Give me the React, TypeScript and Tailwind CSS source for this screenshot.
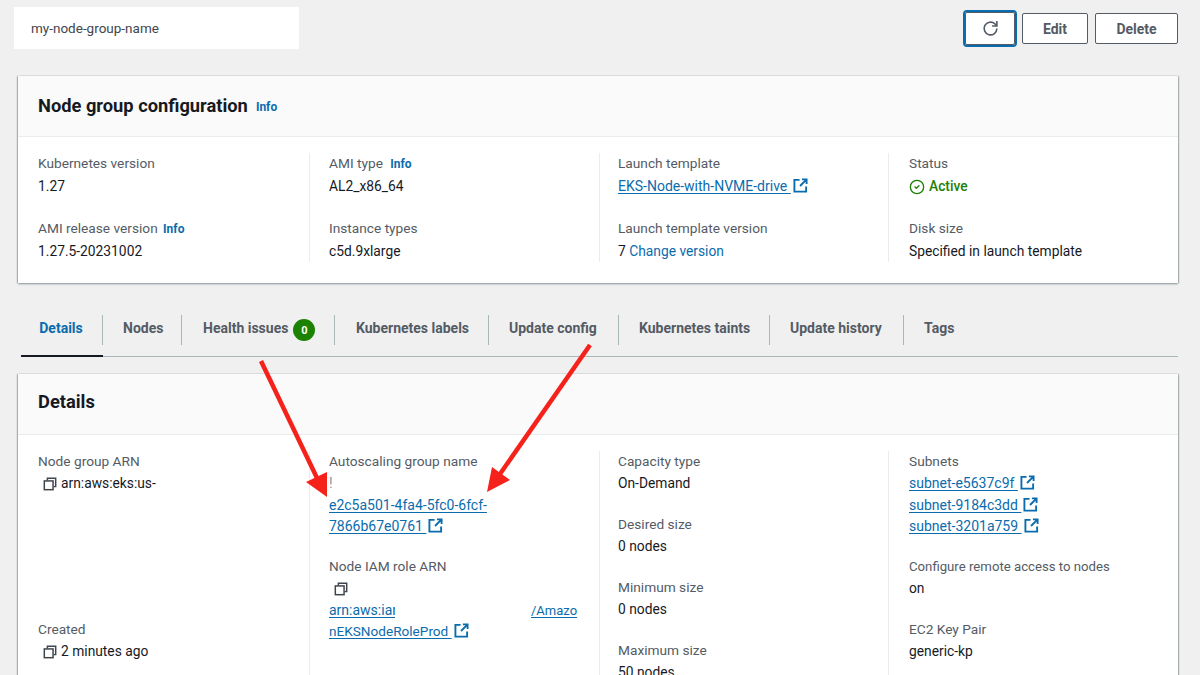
import React from 'react'
import { CircleCheck } from 'lucide-react'

const ExternalIcon = () => (
  <svg viewBox="0 0 16 16" fill="none" stroke="#0a6cad" strokeWidth="2" className="inline-block w-[15px] h-[15px] ml-[2px] align-[-2px]">
    <path d="M7 2H1.5v12.5H14V9" />
    <path d="M9.5 1.5h5v5M14.5 1.5 7.5 8.5" />
  </svg>
)

const CopyIcon = () => (
  <svg viewBox="0 0 16 16" fill="none" stroke="#3f454d" strokeWidth="1.7" className="w-[14px] h-[14px] shrink-0">
    <path d="M5 4V1.5h9.5V11H12" />
    <rect x="1.5" y="4.5" width="10" height="10" />
  </svg>
)

const Info = ({ className = '' }: { className?: string }) => (
  <span className={`text-[12px] font-bold text-[#0a6cad] ${className}`}>Info</span>
)

const Label = ({ children }: { children: React.ReactNode }) => (
  <div className="text-[#545b64] text-[13.7px] h-[21px] whitespace-nowrap">{children}</div>
)

const Link = ({ children }: { children: React.ReactNode }) => (
  <a className="text-[#0a6cad] text-[14px] underline underline-offset-2">{children}</a>
)

const Field = ({ label, children, tight }: { label: React.ReactNode; children: React.ReactNode; tight?: boolean }) => (
  <div>
    <Label>{label}</Label>
    <div className={`${tight ? 'mt-[1px]' : 'mt-[2px]'} text-[13.8px] text-[#16191f] min-h-[21px]`}>{children}</div>
  </div>
)

const Column = ({ first, children, className = '' }: { first?: boolean; children: React.ReactNode; className?: string }) => (
  <div className={`${first ? 'pl-[20px]' : 'border-l border-[#eaeded] pl-[19px]'} pr-[10px] ${className}`}>{children}</div>
)

const tabs = ['Nodes', 'Health issues', 'Kubernetes labels', 'Update config', 'Kubernetes taints', 'Update history', 'Tags']
const tabWidths = ['w-[79px]', 'w-[153px]', 'w-[154px]', 'w-[130px]', 'w-[151px]', 'w-[134px]', 'w-[72px]']

export default function App() {
  return (
    <div className="relative w-[1200px] h-[675px] overflow-hidden bg-[#f0f0f0] text-[14px] leading-[21px] font-['Roboto',sans-serif]">
      {/* top bar */}
      <div className="flex items-start justify-between pl-[14px] pr-[22px] pt-[7px] h-[76px]">
        <div className="w-[285px] h-[42px] bg-white pl-[17px] flex items-center text-[13.5px] text-[#3f454d]">my-node-group-name</div>
        <div className="flex items-center gap-[5px] pt-[3px]">
          <button className="w-[54px] h-[37px] rounded-[4px] border-2 border-[#0a6cad] flex items-center justify-center bg-white outline outline-1 outline-offset-[-3px] outline-[#545b64]">
            <svg viewBox="0 0 16 16" fill="none" stroke="#545b64" strokeWidth="1.5" className="w-[17px] h-[17px]">
              <path d="M14 8a6 6 0 1 1-2-4.5L14 5.5" />
              <path d="M14 1v4.7H9.5" />
            </svg>
          </button>
          <button className="w-[66px] h-[31px] pt-[1px] rounded-[2px] border border-[#545b64] bg-white font-bold text-[#545b64]">Edit</button>
          <button className="ml-[2px] w-[83px] h-[31px] pt-[1px] rounded-[2px] border border-[#545b64] bg-white font-bold text-[#545b64]">Delete</button>
        </div>
      </div>

      {/* node group configuration */}
      <section className="mx-[18px] w-[1160px] h-[207px] bg-white shadow-[0_1px_2px_rgba(0,28,36,0.4),1px_0_1px_rgba(0,28,36,0.2),-1px_0_1px_rgba(0,28,36,0.2)]">
        <header className="h-[61px] bg-[#fafafa] border-b border-[#eaeded] pl-[20px] pb-[2px] flex items-center gap-[8px]">
          <h2 className="text-[18.3px] font-bold text-[#16191f]">Node group configuration</h2>
          <Info className="mt-[5px]" />
        </header>
        <div className="grid grid-cols-[291px_290px_290px_289px] pt-[16px]">
          <Column first className="flex flex-col gap-[21px]">
            <Field label="Kubernetes version">1.27</Field>
            <Field label={<>AMI release version <Info className="ml-[2px]" /></>}>1.27.5-20231002</Field>
          </Column>
          <Column className="flex flex-col gap-[21px]">
            <Field label={<>AMI type <Info className="ml-[4px]" /></>}>AL2_x86_64</Field>
            <Field label="Instance types">c5d.9xlarge</Field>
          </Column>
          <Column className="flex flex-col gap-[21px] !pl-[18px]">
            <Field label="Launch template"><Link>EKS-Node-with-NVME-drive&nbsp;</Link><ExternalIcon /></Field>
            <Field label="Launch template version">7 <span className="text-[#0a6cad]">Change version</span></Field>
          </Column>
          <Column className="flex flex-col gap-[21px] !pl-[20px] -ml-[1px]">
            <Field label="Status">
              <span className="flex items-center gap-[4px] font-medium text-[#1d8102]"><CircleCheck size={16} strokeWidth={2} />Active</span>
            </Field>
            <Field label="Disk size">Specified in launch template</Field>
          </Column>
        </div>
      </section>

      {/* tabs */}
      <nav className="mx-[21px] mt-[27px] w-[1157px] h-[47px] border-b border-[#aab7b8] flex items-start pt-[3px] font-bold text-[#545b64] relative">
        <div className="w-[82px] h-[44px] flex items-center justify-center text-[#0a6cad] border-b-[2px] border-[#16191f] mr-[-1px] pb-[11px] pr-[2px]">Details</div>
        {tabs.map((tab, i) => (
          <div key={tab} className={`${tabWidths[i]} ${i === 1 || i === 2 ? 'pl-[21px]' : 'pl-[20px]'} h-[30px] mt-[2px] pb-[4px] border-l border-[#aab7b8] flex items-center whitespace-nowrap gap-[5px]`}>
            {tab}
            {tab === 'Health issues' && (
              <span className="w-[22px] h-[22px] mt-[4px] rounded-full bg-[#1d8102] text-white text-[11px] flex items-center justify-center">0</span>
            )}
          </div>
        ))}
      </nav>

      {/* details */}
      <section className="mx-[18px] mt-[17px] w-[1160px] h-[320px] bg-white shadow-[0_1px_2px_rgba(0,28,36,0.4),1px_0_1px_rgba(0,28,36,0.2),-1px_0_1px_rgba(0,28,36,0.2)]">
        <header className="h-[61px] bg-[#fafafa] border-b border-[#eaeded] pl-[20px] pb-[6px] flex items-center">
          <h2 className="text-[18.3px] font-bold text-[#16191f]">Details</h2>
        </header>
        <div className="grid grid-cols-[291px_290px_290px_289px] pt-[16px] h-[260px]">
          <Column first>
            <Field tight label="Node group ARN">
              <span className="flex items-center gap-[4px] pl-[5px]"><CopyIcon />arn:aws:eks:us-</span>
            </Field>
            <div className="mt-[125px]">
              <Field tight label="Created">
                <span className="flex items-center gap-[4px] pl-[5px]"><CopyIcon />2 minutes ago</span>
              </Field>
            </div>
          </Column>
          <Column>
            <Field tight label="Autoscaling group name">
              <div className="h-[22px] w-[3px] overflow-hidden text-[#8a9099]">!</div>
              <Link>e2c5a501-4fa4-5fc0-6fcf-</Link>
              <br />
              <Link>7866b67e0761&nbsp;</Link>
              <ExternalIcon />
            </Field>
            <div className="mt-[19px]">
              <Field tight label="Node IAM role ARN">
                <div className="h-[22px] flex items-center pl-[5px]"><CopyIcon /></div>
                <div className="flex whitespace-nowrap">
                  <span className="w-[66px] overflow-hidden shrink-0"><Link>arn:aws:iar</Link></span>
                  <span className="w-[136px] shrink-0" />
                  <a className="text-[#0a6cad] text-[13px] underline underline-offset-2">/Amazo</a>
                </div>
                <a className="text-[#0a6cad] text-[13.6px] underline underline-offset-2">nEKSNodeRoleProd&nbsp;</a>
                <ExternalIcon />
              </Field>
            </div>
          </Column>
          <Column className="flex flex-col gap-[20px] !pl-[18px]">
            <Field tight label="Capacity type">On-Demand</Field>
            <Field tight label="Desired size">0 nodes</Field>
            <Field tight label="Minimum size">0 nodes</Field>
            <Field tight label="Maximum size">50 nodes</Field>
          </Column>
          <Column className="!pl-[20px] -ml-[1px]">
            <Field tight label="Subnets">
              <div><Link>subnet-e5637c9f&nbsp;</Link><ExternalIcon /></div>
              <div className="mt-[1px]"><Link>subnet-9184c3dd&nbsp;</Link><ExternalIcon /></div>
              <div><Link>subnet-3201a759&nbsp;</Link><ExternalIcon /></div>
            </Field>
            <div className="mt-[19px] flex flex-col gap-[20px]">
              <Field tight label={<span className="text-[13.2px]">Configure remote access to nodes</span>}>on</Field>
              <Field tight label="EC2 Key Pair">generic-kp</Field>
            </div>
          </Column>
        </div>
      </section>

      {/* annotation arrows */}
      <svg viewBox="0 0 1200 675" className="absolute inset-0 w-[1200px] h-[675px] pointer-events-none">
        <path d="M261 361 317 478" stroke="#f5221b" strokeWidth="4.5" fill="none" />
        <path d="M306 482 327 472 327 497Z" fill="#f5221b" />
        <path d="M590 345 500 474" stroke="#f5221b" strokeWidth="4.5" fill="none" />
        <path d="M492 467 510 480 487 492Z" fill="#f5221b" />
      </svg>
    </div>
  )
}
